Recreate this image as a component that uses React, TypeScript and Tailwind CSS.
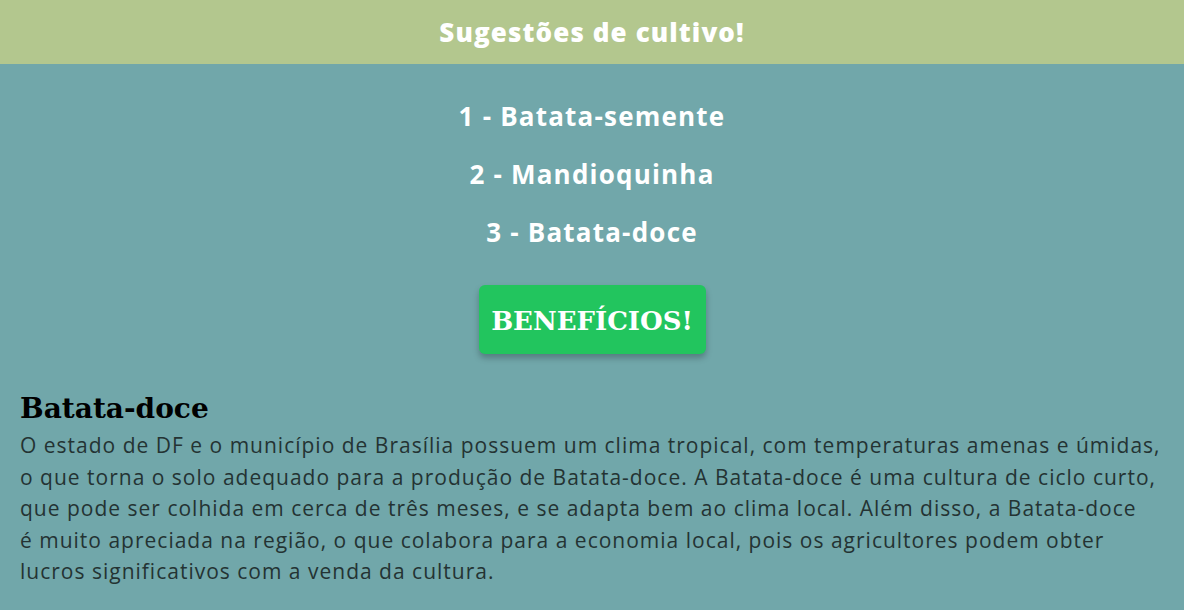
export default function App() {
  const items = ["1 - Batata-semente", "2 - Mandioquinha", "3 - Batata-doce"];

  return (
    <div className="min-h-[610px] w-full bg-[#71a7aa] font-['Open_Sans','Noto_Sans',sans-serif]">
      {/* Header */}
      <header className="flex h-[64px] items-center justify-center bg-[#b3c78e]">
        <h1 className="text-[26px] font-extrabold tracking-[1.1px] text-white">Sugestões de cultivo!</h1>
      </header>

      {/* Lista de culturas */}
      <ul className="flex flex-col items-center gap-[20px] pt-[33px]">
        {items.map((item) => (
          <li key={item} className="text-[26px] leading-[38px] font-bold tracking-[1.2px] text-white">
            {item}
          </li>
        ))}
      </ul>

      <div className="flex justify-center pt-[34px]">
        <button className="h-[69px] w-[227px] rounded-md bg-[#22c55e] pt-[4px] font-['DejaVu_Serif',serif] text-[26px] font-bold text-white shadow-[0_4px_6px_rgba(0,0,0,0.25)]">
          BENEFÍCIOS!
        </button>
      </div>

      {/* Descrição */}
      <section className="px-[20px] pt-[38px]">
        <h2 className="font-['DejaVu_Serif',serif] text-[28px] leading-[34px] font-bold text-black">
          Batata-doce
        </h2>
        <p className="mt-[4px] text-[21px] leading-[31.5px] tracking-[1px] text-[#243333]">
          O estado de DF e o município de Brasília possuem um clima tropical, com temperaturas amenas e úmidas,
          <br />
          o que torna o solo adequado para a produção de Batata-doce. A Batata-doce é uma cultura de ciclo curto,
          <br />
          que pode ser colhida em cerca de três meses, e se adapta bem ao clima local. Além disso, a Batata-doce
          <br />
          é muito apreciada na região, o que colabora para a economia local, pois os agricultores podem obter
          <br />
          lucros significativos com a venda da cultura.
        </p>
      </section>
    </div>
  );
}
